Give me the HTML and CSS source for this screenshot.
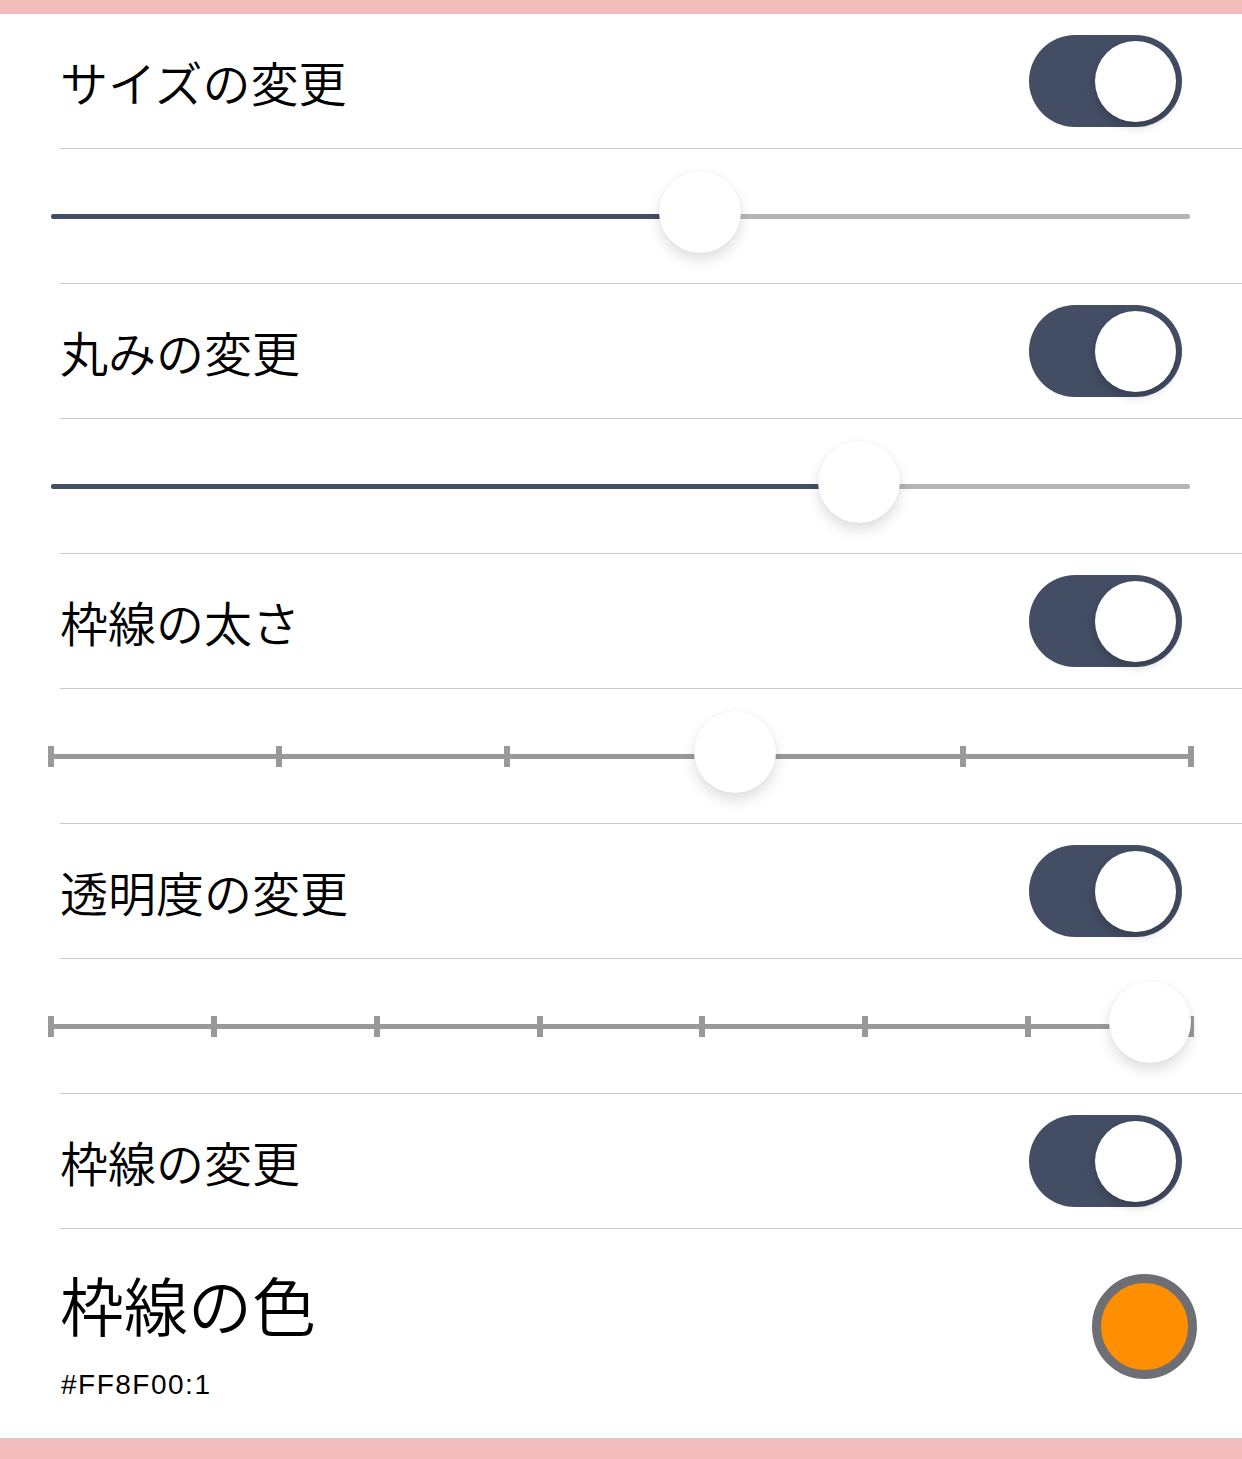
FILE: index.html
```html
<!DOCTYPE html>
<html lang="ja">
<head>
<meta charset="utf-8">
<title>設定</title>
<link rel="stylesheet" href="styles.css">
</head>
<body>
<div class="bar bar-top"></div>
<main class="list">
  <div class="row toggle-row">
    <span class="label">サイズの変更</span>
    <span class="switch"><span class="knob"></span></span>
  </div>
  <div class="sep"></div>
  <div class="row slider-row">
    <div class="slider">
      <div class="track"><div class="fill" style="width:649px"></div></div>
      <div class="thumb" style="left:611px"></div>
    </div>
  </div>
  <div class="sep"></div>
  <div class="row toggle-row">
    <span class="label">丸みの変更</span>
    <span class="switch"><span class="knob"></span></span>
  </div>
  <div class="sep"></div>
  <div class="row slider-row">
    <div class="slider">
      <div class="track"><div class="fill" style="width:808px"></div></div>
      <div class="thumb" style="left:770px"></div>
    </div>
  </div>
  <div class="sep"></div>
  <div class="row toggle-row">
    <span class="label">枠線の太さ</span>
    <span class="switch"><span class="knob"></span></span>
  </div>
  <div class="sep"></div>
  <div class="row slider-row">
    <div class="slider stepped">
      <div class="step-track">
        <span class="tick"></span><span class="tick"></span><span class="tick"></span>
        <span class="tick"></span><span class="tick"></span><span class="tick"></span>
      </div>
      <div class="thumb" style="left:646px"></div>
    </div>
  </div>
  <div class="sep"></div>
  <div class="row toggle-row">
    <span class="label">透明度の変更</span>
    <span class="switch"><span class="knob"></span></span>
  </div>
  <div class="sep"></div>
  <div class="row slider-row">
    <div class="slider stepped">
      <div class="step-track">
        <span class="tick"></span><span class="tick"></span><span class="tick"></span><span class="tick"></span>
        <span class="tick"></span><span class="tick"></span><span class="tick"></span><span class="tick"></span>
      </div>
      <div class="thumb" style="left:1061px"></div>
    </div>
  </div>
  <div class="sep"></div>
  <div class="row toggle-row">
    <span class="label">枠線の変更</span>
    <span class="switch"><span class="knob"></span></span>
  </div>
  <div class="sep"></div>
  <div class="row color-row">
    <div class="color-text">
      <div class="color-title">枠線の色</div>
      <div class="color-code">#FF8F00:1</div>
    </div>
    <span class="swatch"></span>
  </div>
</main>
<div class="bar bar-bottom"></div>
</body>
</html>
```

FILE: styles.css
```css
* { box-sizing: border-box; }
html, body { margin: 0; padding: 0; background: #ffffff; }
body {
  width: 1242px;
  height: 1459px;
  overflow: hidden;
  font-family: "Noto Sans CJK JP", "Noto Sans", sans-serif;
  color: #000;
  display: flex;
  flex-direction: column;
}
.bar { background: #f2bcbd; }
.bar-top { height: 14px; }
.bar-bottom { height: 21px; border-top: 1px solid #cfcfcf; }
.list { display: flex; flex-direction: column; flex: 1; }
.sep { height: 1px; margin-left: 60px; background: #c8c7cc; }
.row { height: 134px; display: flex; align-items: center; }
.toggle-row { justify-content: space-between; padding: 0 60px 0 60px; }
.label { font-size: 48px; line-height: 1; font-weight: 350; letter-spacing: 0; }
.switch {
  width: 153px; height: 92px; border-radius: 46px; background: #434d63;
  display: flex; align-items: center; justify-content: flex-end; padding: 0 6px;
}
.knob {
  width: 81px; height: 81px; border-radius: 50%; background: #fff;
  box-shadow: 0 5px 10px rgba(0,0,0,0.18), 0 0 1px rgba(0,0,0,0.1);
}
.slider-row { padding: 0 48px; }
.slider { position: relative; flex: 1; height: 100%; display: flex; align-items: center; }
.track { flex: 1; height: 5px; margin: 0 4px 0 3px; border-radius: 3px; background: #b5b5b5; overflow: hidden; }
.fill { height: 100%; background: #434d63; }
.thumb {
  position: absolute; top: 50%; width: 82px; height: 82px; margin-top: -45px;
  border-radius: 50%; background: #fff;
  box-shadow: 0 7px 14px rgba(0,0,0,0.13), 0 0 2px rgba(0,0,0,0.08);
}
.step-track {
  flex: 1; height: 21px; display: flex; justify-content: space-between; align-items: center;
  background: linear-gradient(#999, #999) center / 100% 5px no-repeat;
}
.tick { width: 6px; height: 21px; background: #999; }
.color-row { height: 208px; justify-content: space-between; padding: 0 45px 0 60px; }
.color-text { display: flex; flex-direction: column; padding-top: 4px; }
.color-title { font-size: 64px; line-height: 1; font-weight: 350; }
.color-code { font-family: "Liberation Sans", Arial, sans-serif; font-size: 28px; line-height: 1; margin-top: 36px; letter-spacing: 1.5px; padding-left: 1px; }
.swatch {
  width: 105px; height: 105px; border-radius: 50%; background: #ff8f00;
  border: 9px solid #6e6f74; margin-bottom: 14px;
}
```
